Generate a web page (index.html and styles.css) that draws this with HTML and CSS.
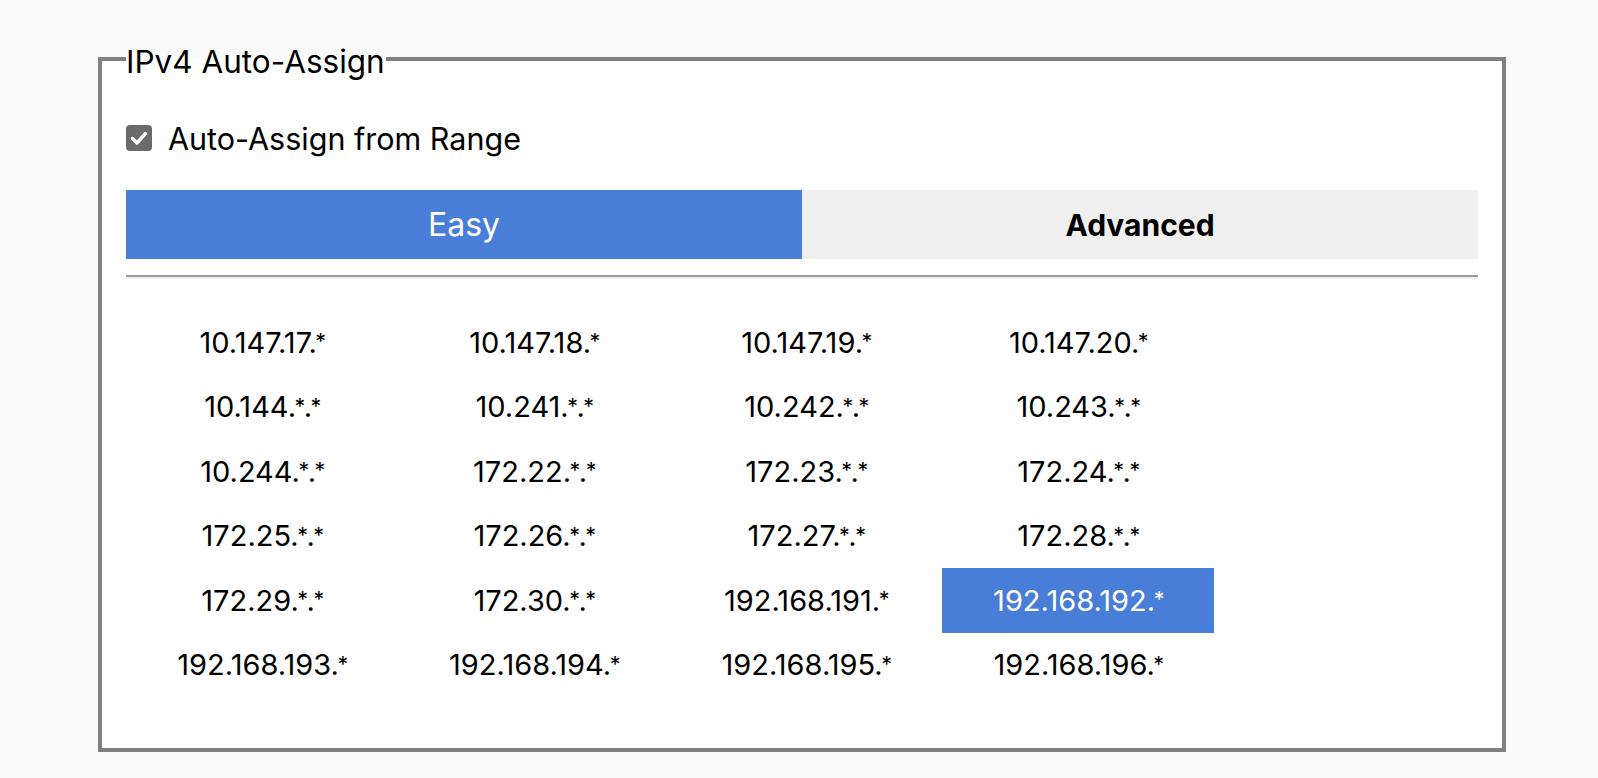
FILE: index.html
```html
<!DOCTYPE html>
<html lang="en">
<head>
    <meta charset="UTF-8">
    <meta name="viewport" content="width=device-width, initial-scale=1.0">
    <title>IPv4 Auto-Assign</title>
    <link rel="stylesheet" href="styles.css">
</head>
<body>
    <fieldset class="assign">
        <legend>IPv4 Auto-Assign</legend>

        <label class="check-row">
            <span class="checkbox">
                <svg viewBox="0 0 26 26" width="26" height="26">
                    <path d="M6.5 13.5 L11 18 L19.5 8.5" fill="none" stroke="#fff" stroke-width="3.4" stroke-linecap="round" stroke-linejoin="round"/>
                </svg>
            </span>
            Auto-Assign from Range
        </label>

        <div class="tabs">
            <div class="tab active">Easy</div>
            <div class="tab bold">Advanced</div>
        </div>

        <hr class="divider">

        <div class="ranges">
            <div class="range">10.147.17.<span class="star">*</span></div>
            <div class="range">10.147.18.<span class="star">*</span></div>
            <div class="range">10.147.19.<span class="star">*</span></div>
            <div class="range">10.147.20.<span class="star">*</span></div>
            <div class="range">10.144.<span class="star">*</span>.<span class="star">*</span></div>
            <div class="range">10.241.<span class="star">*</span>.<span class="star">*</span></div>
            <div class="range">10.242.<span class="star">*</span>.<span class="star">*</span></div>
            <div class="range">10.243.<span class="star">*</span>.<span class="star">*</span></div>
            <div class="range">10.244.<span class="star">*</span>.<span class="star">*</span></div>
            <div class="range">172.22.<span class="star">*</span>.<span class="star">*</span></div>
            <div class="range">172.23.<span class="star">*</span>.<span class="star">*</span></div>
            <div class="range">172.24.<span class="star">*</span>.<span class="star">*</span></div>
            <div class="range">172.25.<span class="star">*</span>.<span class="star">*</span></div>
            <div class="range">172.26.<span class="star">*</span>.<span class="star">*</span></div>
            <div class="range">172.27.<span class="star">*</span>.<span class="star">*</span></div>
            <div class="range">172.28.<span class="star">*</span>.<span class="star">*</span></div>
            <div class="range">172.29.<span class="star">*</span>.<span class="star">*</span></div>
            <div class="range">172.30.<span class="star">*</span>.<span class="star">*</span></div>
            <div class="range">192.168.191.<span class="star">*</span></div>
            <div class="range selected">192.168.192.<span class="star">*</span></div>
            <div class="range">192.168.193.<span class="star">*</span></div>
            <div class="range">192.168.194.<span class="star">*</span></div>
            <div class="range">192.168.195.<span class="star">*</span></div>
            <div class="range">192.168.196.<span class="star">*</span></div>
        </div>
    </fieldset>
</body>
</html>
```

FILE: styles.css
```css
body {
    margin: 0;
    padding: 41px 0 0 98px;
    background-color: #fafafa;
    font-family: Inter, "Noto Sans", sans-serif;
    color: #000;
}
.assign {
    box-sizing: border-box;
    width: 1408px;
    margin: 0;
    padding: 0 24px 51px 24px;
    border: 4px solid #808080;
    background-color: #fff;
}
.assign legend {
    padding: 5px 1px 0 0;
    font-size: 31.5px;
    line-height: 31px;
}
.check-row {
    display: flex;
    align-items: center;
    height: 36px;
    margin-top: 43px;
    font-size: 30.5px;
}
.checkbox {
    display: flex;
    width: 26px;
    height: 26px;
    margin-right: 16px;
    border-radius: 4px;
    background-color: #6b6b6b;
}
.tabs {
    display: flex;
    margin-top: 34px;
    height: 69px;
}
.tab {
    flex: 1;
    display: flex;
    align-items: center;
    justify-content: center;
    background-color: #efefef;
    font-size: 32px;
}
.tab.active {
    background-color: #497ed8;
    color: #fff;
}
.tab.bold {
    font-size: 30px;
    font-weight: 700;
}
.divider {
    margin: 16px 0 0 0;
    height: 0;
    border: 0;
    border-top: 2px solid #9a9a9a;
    border-bottom: 2px solid #eeeeee;
}
.ranges {
    display: flex;
    flex-wrap: wrap;
    width: 1088px;
    margin-top: 31px;
}
.range {
    width: 272px;
    height: 64.5px;
    display: flex;
    align-items: center;
    justify-content: center;
    font-size: 29px;
}
.star {
    font-size: 0.74em;
    margin: 0 -1.5px;
    position: relative;
    top: -1px;
}
.range.selected {
    background-color: #497ed8;
    color: #fff;
}
```
